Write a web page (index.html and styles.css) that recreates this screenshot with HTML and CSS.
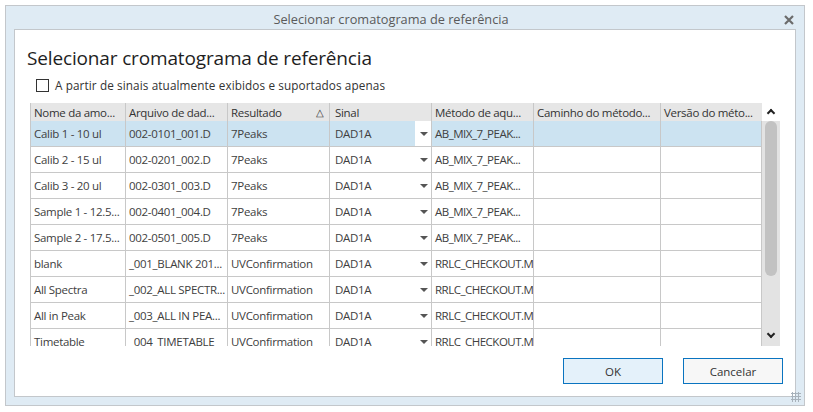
FILE: index.html
```html
<!DOCTYPE html>
<html lang="pt">
<head>
    <meta charset="UTF-8">
    <title>Selecionar cromatograma de referência</title>
    <link rel="stylesheet" href="styles.css">
</head>
<body>
    <div class="window">
        <div class="titlebar">
            <span class="title">Selecionar cromatograma de referência</span>
            <svg class="close" width="10" height="10" viewBox="0 0 10 10">
                <path d="M1 1 L9 9 M9 1 L1 9" stroke="#6b6b6b" stroke-width="2.2"/>
            </svg>
        </div>

        <div class="panel">
            <h1>Selecionar cromatograma de referência</h1>

            <label class="check">
                <span class="box"></span>
                A partir de sinais atualmente exibidos e suportados apenas
            </label>

            <div class="grid-wrap">
                <div class="grid">
                    <div class="row head">
                        <div class="cell c1">Nome da amo...</div>
                        <div class="cell c2">Arquivo de dad...</div>
                        <div class="cell c3">Resultado <span class="sort">&#x25B3;</span></div>
                        <div class="cell c4">Sinal</div>
                        <div class="cell c5">Método de aqu...</div>
                        <div class="cell c6">Caminho do método...</div>
                        <div class="cell c7">Versão do méto...</div>
                    </div>
                    <div id="rows"></div>
                </div>
                <div class="scrollbar">
                    <div class="arrow up"></div>
                    <div class="track">
                        <div class="thumb"></div>
                        <div class="arrow down"></div>
                    </div>
                </div>
            </div>

            <div class="buttons">
                <button class="btn ok">OK</button>
                <button class="btn">Cancelar</button>
            </div>
        </div>
        <div class="grip"></div>
    </div>

    <script>
        const data = [
            ['Calib 1 - 10 ul', '002-0101_001.D', '7Peaks', 'AB_MIX_7_PEAK...'],
            ['Calib 2 - 15 ul', '002-0201_002.D', '7Peaks', 'AB_MIX_7_PEAK...'],
            ['Calib 3 - 20 ul', '002-0301_003.D', '7Peaks', 'AB_MIX_7_PEAK...'],
            ['Sample 1 - 12.5...', '002-0401_004.D', '7Peaks', 'AB_MIX_7_PEAK...'],
            ['Sample 2 - 17.5...', '002-0501_005.D', '7Peaks', 'AB_MIX_7_PEAK...'],
            ['blank', '_001_BLANK 201...', 'UVConfirmation', 'RRLC_CHECKOUT.M'],
            ['All Spectra', '_002_ALL SPECTR...', 'UVConfirmation', 'RRLC_CHECKOUT.M'],
            ['All in Peak', '_003_ALL IN PEA...', 'UVConfirmation', 'RRLC_CHECKOUT.M'],
            ['Timetable', '_004_TIMETABLE', 'UVConfirmation', 'RRLC_CHECKOUT.M']
        ];

        const rows = document.getElementById('rows');
        data.forEach(function(d, i) {
            const row = document.createElement('div');
            row.className = 'row' + (i === 0 ? ' selected' : '');
            row.innerHTML =
                '<div class="cell c1">' + d[0] + '</div>' +
                '<div class="cell c2">' + d[1] + '</div>' +
                '<div class="cell c3">' + d[2] + '</div>' +
                '<div class="cell c4"><span>DAD1A</span><span class="drop"></span></div>' +
                '<div class="cell c5">' + d[3] + '</div>' +
                '<div class="cell c6"></div>' +
                '<div class="cell c7"></div>';
            rows.appendChild(row);
        });
    </script>
</body>
</html>
```

FILE: styles.css
```css
body {
    margin: 0;
    background-color: #ffffff;
    font-family: 'Open Sans', 'Noto Sans', sans-serif;
    color: #3c3c3c;
}

.window {
    position: relative;
    margin: 5px 0 0 5px;
    width: 798px;
    height: 399px;
    background-color: #dfebf4;
    border: 1px solid #c3c7cb;
    display: flex;
    flex-direction: column;
}

.titlebar {
    height: 23px;
    display: flex;
    align-items: center;
    justify-content: center;
    padding-right: 28px;
    position: relative;
}

.title {
    font-size: 12.75px;
    color: #5a5a5a;
    margin-top: 2px;
}

.close {
    position: absolute;
    right: 10px;
    top: 9px;
}

.panel {
    margin: 0 8px 0 8px;
    height: 366px;
    background-color: #ffffff;
    border: 1px solid #c3c7cb;
    padding: 0 12px 0 15px;
}

h1 {
    font-size: 19px;
    font-weight: normal;
    color: #1e1e1e;
    margin: 14px 0 0 -3px;
    line-height: 28px;
    letter-spacing: -0.15px;
}

.check {
    display: flex;
    align-items: center;
    font-size: 11.75px;
    color: #333;
    margin: 5px 0 0 6px;
    height: 16px;
    letter-spacing: 0.1px;
}

.box {
    width: 11px;
    height: 11px;
    border: 1px solid #333;
    margin-right: 6px;
}

.grid-wrap {
    display: flex;
    margin-top: 10px;
    height: 243px;
    overflow: hidden;
}

.grid {
    width: 732px;
}

.row {
    box-sizing: border-box;
    display: flex;
    height: 26px;
    border-bottom: 1px solid #c8c8c8;
}

.row.head {
    height: 18px;
    background-color: #e6e6e6;
    border-bottom: none;
}

.row.selected {
    background-color: #cce3f1;
}

.cell {
    box-sizing: border-box;
    border-left: 1px solid #c8c8c8;
    padding: 0 0 0 3px;
    font-size: 11.5px;
    letter-spacing: -0.3px;
    display: flex;
    align-items: center;
    white-space: nowrap;
    overflow: hidden;
    color: #404040;
}

.row.head .cell {
    color: #333;
}

.c1 { width: 95px; }
.c2 { width: 102px; }
.c3 { width: 102px; }
.c4 { width: 102px; }
.c5 { width: 102px; letter-spacing: -0.5px; }
.c6 { width: 127px; }
.c7 { width: 102px; border-right: 1px solid #c8c8c8; }

.row.head .c5 { letter-spacing: -0.3px; }
.row.head .c7 { border-right: none; }

.sort {
    margin-left: auto;
    margin-right: 5px;
    font-size: 10px;
    color: #333;
}

.c4 {
    padding-right: 0;
    padding-left: 5px;
}

.drop {
    margin-left: auto;
    width: 16px;
    height: 100%;
    position: relative;
}

.drop::after {
    content: '';
    position: absolute;
    left: 5px;
    top: 11px;
    border-left: 4px solid transparent;
    border-right: 4px solid transparent;
    border-top: 4px solid #555;
}

.row.selected .drop {
    background-color: #ffffff;
}

.scrollbar {
    width: 18px;
    display: flex;
    flex-direction: column;
}

.arrow {
    height: 18px;
    position: relative;
}

.arrow::after {
    content: '';
    position: absolute;
    left: 6px;
    top: 7px;
    width: 4px;
    height: 4px;
    border-left: 2px solid #222;
    border-top: 2px solid #222;
    transform: rotate(45deg);
}

.arrow.down::after {
    top: 3px;
    transform: rotate(225deg);
}

.track {
    flex: 1;
    background-color: #e3e3e3;
    display: flex;
    flex-direction: column;
    justify-content: space-between;
}

.thumb {
    margin: 0 auto;
    width: 12px;
    height: 155px;
    border-radius: 6px;
    background-color: #c2c2c2;
}

.buttons {
    display: flex;
    justify-content: flex-end;
    gap: 20px;
    margin: 12px 0 0 0;
}

.btn {
    width: 100px;
    height: 26px;
    border: 1px solid #0a74c0;
    background-color: #f7f7f7;
    font-family: 'Open Sans', 'Noto Sans', sans-serif;
    font-size: 11.5px;
    color: #333;
}

.btn.ok {
    background-color: #e4f1fa;
}

.grip {
    position: absolute;
    right: 3px;
    bottom: 3px;
    width: 10px;
    height: 10px;
    background-image: radial-gradient(#a8b2bb 1px, transparent 1.2px);
    background-size: 3px 3px;
}
```
